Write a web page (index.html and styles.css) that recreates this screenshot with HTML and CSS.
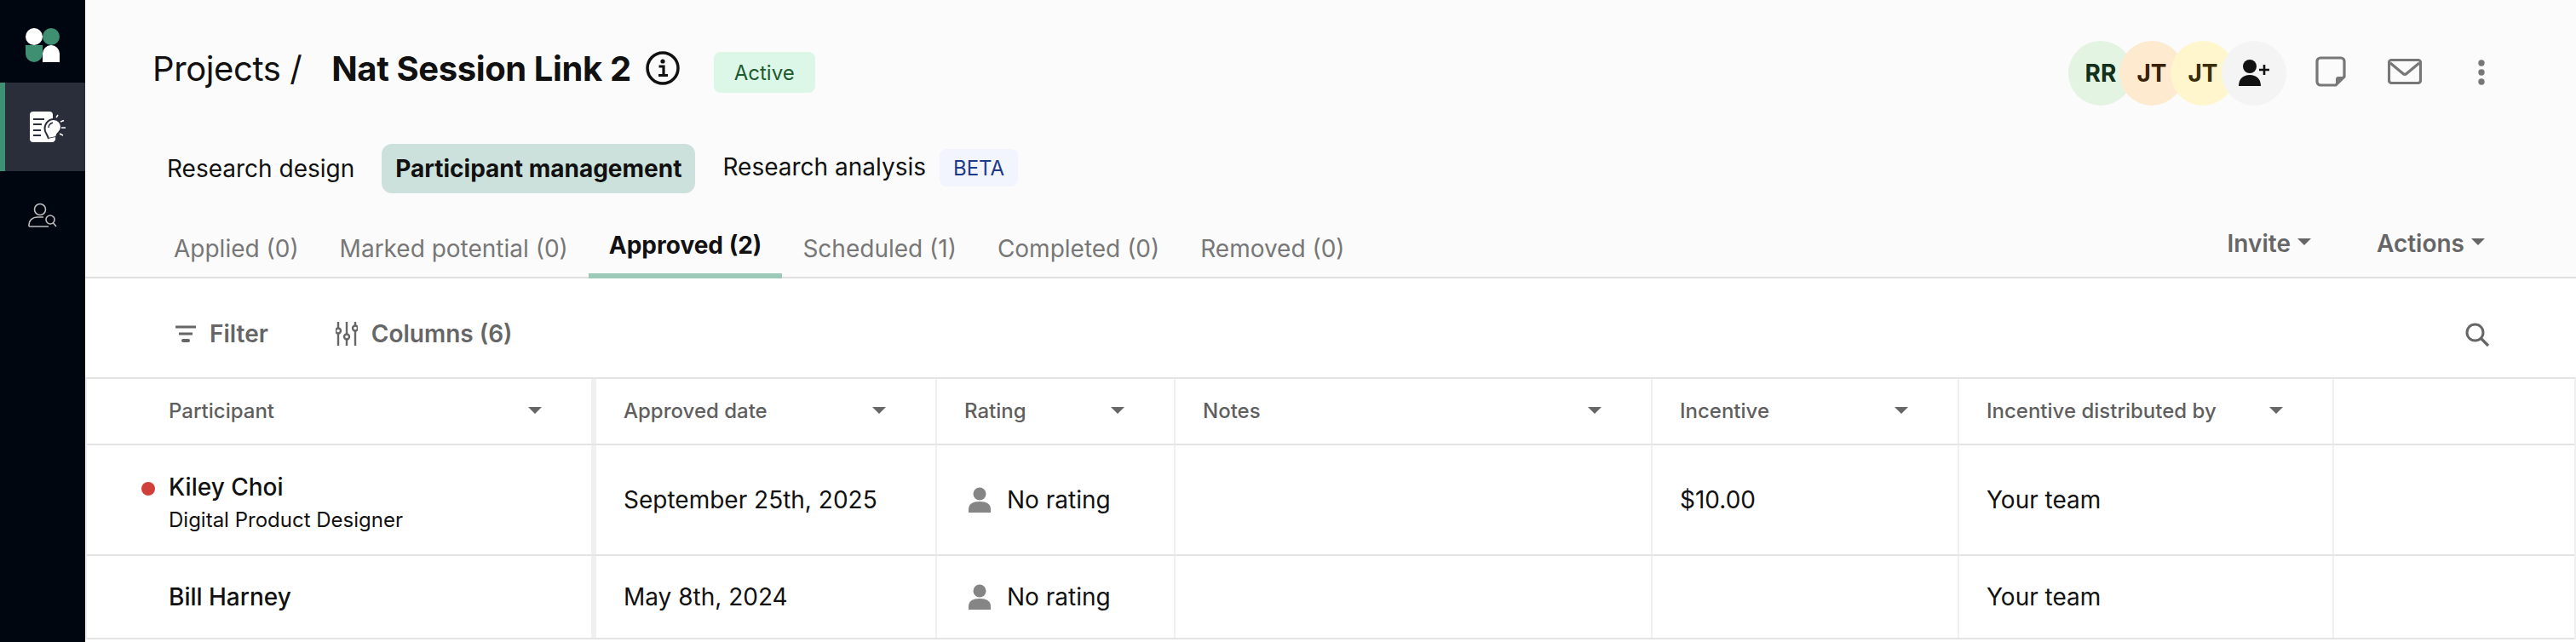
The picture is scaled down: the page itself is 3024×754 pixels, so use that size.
FILE: index.html
```html
<!DOCTYPE html>
<html lang="en">
<head>
<meta charset="utf-8">
<title>Nat Session Link 2</title>
<link rel="stylesheet" href="styles.css">
</head>
<body>
<div class="app">
  <aside class="sidebar">
    <div class="logo-wrap">
      <svg class="logo" width="40" height="40" viewBox="0 0 40 40"><circle cx="10" cy="10" r="10" fill="#fff"/><circle cx="30" cy="10" r="10" fill="#3f8f73"/><path d="M0 20h20v10a10 10 0 0 1-20 0z" fill="#3f8f73"/><path d="M20 40V30a10 10 0 0 1 20 0v10z" fill="#fff"/></svg>
    </div>
    <div class="side-item side-item-active">
      <svg width="44" height="38" viewBox="0 0 44 38"><rect x="1" y="1" width="27" height="36" rx="4" fill="#fff"/><path d="M5 10h13M5 16h10M5 23h9M5 29h9" stroke="#2a2e3a" stroke-width="1.800"/><path d="M19 24c-2-7 3-14 10-14 6 0 9 5 9 9 0 5-3 6-5 9l-1 3-9 2c-1-4-3-6-4-9z" fill="#fff" stroke="#2a2e3a" stroke-width="2"/><path d="M22 33l9-2c1 4-2 6-4 6s-4-1-5-4z" fill="#fff"/><path d="M23 20c0-3 2-5 5-6" fill="none" stroke="#2a2e3a" stroke-width="1.400"/><path d="M32 8l2-3M37 13l4-1.500M38 20h5M36 27l4 2" stroke="#fff" stroke-width="1.500" fill="none"/></svg>
    </div>
    <div class="side-item">
      <svg width="34" height="30" viewBox="0 0 34 30"><circle cx="14" cy="8" r="6.500" fill="none" stroke="#bdbdbd" stroke-width="1.600"/><path d="M1 28v-2c0-5 4-9 10-9h7M1 28h23" fill="none" stroke="#bdbdbd" stroke-width="1.600"/><circle cx="26" cy="20" r="5" fill="none" stroke="#bdbdbd" stroke-width="1.600"/><path d="M29.500 24l3.500 4" stroke="#bdbdbd" stroke-width="1.600"/></svg>
    </div>
  </aside>
  <main class="main">
    <header class="header">
      <div class="title-row">
        <div class="title-left">
          <span class="crumb">Projects /</span>
          <h1 class="title">Nat Session Link 2</h1>
          <svg class="info" width="40" height="40" viewBox="0 0 40 40"><circle cx="20" cy="20" r="18" fill="none" stroke="#111" stroke-width="3.500"/><circle cx="20" cy="12" r="2.600" fill="#111"/><path d="M15.500 18h5.500v10M15 28.500h11" fill="none" stroke="#111" stroke-width="3.200"/></svg>
          <span class="badge-active">Active</span>
        </div>
        <div class="title-right">
          <div class="avatars">
            <span class="avatar av-green">RR</span>
            <span class="avatar av-orange">JT</span>
            <span class="avatar av-yellow">JT</span>
            <span class="avatar av-grey">
              <svg width="36" height="32" viewBox="0 0 36 32"><circle cx="13" cy="8" r="8" fill="#111"/><path d="M0 31c0-8 5-13 13-13s13 5 13 13z" fill="#111"/><path d="M30 6v12M24 12h12" stroke="#111" stroke-width="2.600"/></svg>
            </span>
          </div>
          <svg class="icon-note" width="36" height="36" viewBox="0 0 36 36"><path d="M6 2h24a4 4 0 0 1 4 4v18L24 34H6a4 4 0 0 1-4-4V6a4 4 0 0 1 4-4z" fill="none" stroke="#777" stroke-width="3.200"/><path d="M24 34V27a3 3 0 0 1 3-3h7z" fill="#777"/></svg>
          <svg class="icon-mail" width="40" height="30" viewBox="0 0 40 30"><rect x="1.500" y="1.500" width="37" height="27" rx="3" fill="none" stroke="#777" stroke-width="3.200"/><path d="M3 5l15 12.500a3 3 0 0 0 4 0L37 5" fill="none" stroke="#777" stroke-width="3.200"/></svg>
          <svg class="icon-dots" width="12" height="34" viewBox="0 0 12 34"><circle cx="6" cy="6" r="3.700" fill="#777"/><circle cx="6" cy="17" r="3.700" fill="#777"/><circle cx="6" cy="28" r="3.700" fill="#777"/></svg>
        </div>
      </div>
      <nav class="nav-row">
        <a class="nav-link">Research design</a>
        <a class="nav-link nav-link-active">Participant management</a>
        <a class="nav-link nav-link-beta">Research analysis</a>
        <span class="badge-beta">BETA</span>
      </nav>
      <div class="tabs-row">
        <div class="tabs">
          <a class="tab">Applied (0)</a>
          <a class="tab">Marked potential (0)</a>
          <a class="tab tab-active">Approved (2)</a>
          <a class="tab">Scheduled (1)</a>
          <a class="tab">Completed (0)</a>
          <a class="tab">Removed (0)</a>
        </div>
        <div class="tab-actions">
          <button class="drop-btn">Invite<i class="caret caret-btn"></i></button>
          <button class="drop-btn">Actions<i class="caret caret-btn"></i></button>
        </div>
      </div>
    </header>
    <section class="toolbar">
      <div class="tool-left">
        <button class="tool-btn">
          <svg width="24" height="20" viewBox="0 0 24 20"><path d="M0 2h24M4 10h16" stroke="#666" stroke-width="3"/><path d="M9 18h6" stroke="#666" stroke-width="4" stroke-linecap="round"/></svg>
          Filter
        </button>
        <button class="tool-btn">
          <svg width="26" height="28" viewBox="0 0 26 28"><g fill="none" stroke="#666" stroke-width="2.400"><path d="M3 0v7M3 14v14M13 0v14M13 21v7M23 0v4M23 11v17"/><circle cx="3" cy="10.500" r="3"/><circle cx="13" cy="17.500" r="3"/><circle cx="23" cy="7.500" r="3"/></g></svg>
          Columns (6)
        </button>
      </div>
      <svg class="search" width="30" height="30" viewBox="0 0 30 30"><circle cx="12.500" cy="12.500" r="9.500" fill="none" stroke="#666" stroke-width="3"/><path d="M19.500 19.500L28 28" stroke="#666" stroke-width="3.200"/></svg>
    </section>
    <section class="table">
      <div class="row row-head">
        <div class="cell cell-first"><span>Participant</span><i class="caret"></i></div>
        <div class="cell"><span>Approved date</span><i class="caret"></i></div>
        <div class="cell"><span>Rating</span><i class="caret"></i></div>
        <div class="cell"><span>Notes</span><i class="caret"></i></div>
        <div class="cell"><span>Incentive</span><i class="caret"></i></div>
        <div class="cell"><span>Incentive distributed by</span><i class="caret"></i></div>
        <div class="cell cell-last"></div>
      </div>
      <div class="row row-tall">
        <div class="cell cell-first cell-person">
          <i class="status-dot"></i>
          <div class="person"><div class="person-name">Kiley Choi</div><div class="person-role">Digital Product Designer</div></div>
        </div>
        <div class="cell">September 25th, 2025</div>
        <div class="cell cell-rating"><svg width="28" height="30" viewBox="0 0 28 30"><circle cx="14" cy="8" r="7.500" fill="#858585"/><path d="M1 30v-4c0-6 5-9 13-9s13 3 13 9v4z" fill="#858585"/></svg>No rating</div>
        <div class="cell"></div>
        <div class="cell">$10.00</div>
        <div class="cell">Your team</div>
        <div class="cell cell-last"></div>
      </div>
      <div class="row row-short">
        <div class="cell cell-first"><div class="person-name">Bill Harney</div></div>
        <div class="cell">May 8th, 2024</div>
        <div class="cell cell-rating"><svg width="28" height="30" viewBox="0 0 28 30"><circle cx="14" cy="8" r="7.500" fill="#858585"/><path d="M1 30v-4c0-6 5-9 13-9s13 3 13 9v4z" fill="#858585"/></svg>No rating</div>
        <div class="cell"></div>
        <div class="cell"></div>
        <div class="cell">Your team</div>
        <div class="cell cell-last"></div>
      </div>
    </section>
  </main>
</div>
</body>
</html>
```
FILE: styles.css
```css
* { box-sizing: border-box; }
html, body { margin: 0; height: 100%; overflow: hidden; }
body { font-family: Inter, "Liberation Sans", sans-serif; color: #111; background: #fff; }
button { font: inherit; background: none; border: 0; padding: 0; }
.app { display: flex; height: 754px; }

.sidebar { width: 100px; flex: none; background: #000610; display: flex; flex-direction: column; }
.logo-wrap { height: 97px; display: flex; align-items: center; justify-content: center; padding-top: 8px; }
.side-item { height: 104px; display: flex; align-items: center; justify-content: center; }
.side-item-active { background: #2a2e3a; border-left: 6px solid #3f8f73; padding-left: 6px; }

.main { flex: 1; min-width: 0; display: flex; flex-direction: column; }
.header { height: 327px; background: #fbfbfb; border-bottom: 2px solid #e0e0e0; display: flex; flex-direction: column; }

.title-row { height: 160px; padding: 48px 105px 0 79px; display: flex; justify-content: space-between; align-items: flex-start; }
.title-left { display: flex; align-items: center; height: 64px; }
.crumb { font-size: 40px; font-weight: 400; letter-spacing: -0.4px; margin-right: 35px; }
.title { font-size: 40px; font-weight: 700; letter-spacing: -0.4px; margin: 0 17px 0 0; }
.info { flex: none; }
.badge-active { margin: 10px 0 0 40px; height: 48px; width: 119px; border-radius: 8px; background: #dcf6e7; color: #1c5a30; font-size: 24px; display: flex; align-items: center; justify-content: center; }

.title-right { display: flex; align-items: center; height: 76px; }
.avatars { display: flex; margin-right: 34px; }
.avatar { width: 76px; height: 76px; border-radius: 50%; display: flex; align-items: center; justify-content: center; font-size: 28px; font-weight: 700; margin-left: -16px; }
.avatar:first-child { margin-left: 0; }
.av-green { background: #e4f4e2; color: #12301a; }
.av-orange { background: #fdeacf; color: #3a2208; }
.av-yellow { background: #fff6cd; color: #3a2e08; }
.av-grey { background: #f4f4f4; }
.icon-note { margin: -4px 49px 0 0; }
.icon-mail { margin: -4px 64px 0 0; }
.icon-dots { margin-top: -2px; }

.nav-row { height: 58px; margin-top: 9px; padding-left: 80px; display: flex; align-items: center; font-size: 28px; }
.nav-link { padding: 0 16px; height: 58px; display: flex; align-items: center; border-radius: 12px; }
.nav-link-active { background: #cde1dc; font-weight: 700; margin-left: 16px; }
.nav-link-beta { margin-left: 32px; padding: 0 0 4px; }
.badge-beta { margin: 0 0 0 16px; height: 44px; width: 92px; border-radius: 8px; background: #f2f5fe; color: #1e3a8a; font-size: 24px; display: flex; align-items: center; justify-content: center; position: relative; top: -1px; }

.tabs-row { flex: 1; display: flex; justify-content: space-between; padding: 0 107px 0 80px; align-items: flex-end; }
.tabs { display: flex; margin-bottom: -2px; }
.tab { height: 62px; padding: 0 24px 8px; font-size: 28px; color: #777; display: flex; align-items: center; }
.tab-active { color: #111; font-weight: 700; border-bottom: 6px solid #9dc9b9; padding-bottom: 10px; }
.tab-actions { display: flex; gap: 77px; height: 62px; padding-bottom: 16px; align-items: center; }
.drop-btn { font-size: 28px; font-weight: 600; color: #666; display: flex; align-items: center; font-family: inherit; }
.caret { display: block; width: 0; height: 0; border-left: 8px solid transparent; border-right: 8px solid transparent; border-top: 8px solid #666; flex: none; }
.caret-btn { margin-left: 8px; margin-bottom: 4px; }

.toolbar { height: 116px; display: flex; align-items: center; justify-content: space-between; padding: 14px 101px 0 106px; flex: none; }
.tool-left { display: flex; gap: 79px; }
.tool-btn { display: flex; align-items: center; gap: 16px; font-size: 28px; font-weight: 600; color: #666; font-family: inherit; }
.search { margin-top: 2px; }

.table { border: 2px solid #f0f0f0; border-top: 2px solid #e4e4e4; border-bottom: 0; flex: none; }
.row { display: grid; grid-template-columns: 598px 400px 280px 560px 360px 440px 1fr; border-bottom: 2px solid #e4e4e4; font-size: 28px; }
.row-head { height: 78px; font-size: 24px; font-weight: 500; color: #5f5f5f; }
.row-tall { height: 130px; }
.row-short { height: 98px; }
.cell { display: flex; align-items: center; justify-content: flex-start; padding: 0 58px 1px 32px; border-right: 2px solid #f0f0f0; }
.row-head .cell { justify-content: space-between; padding-bottom: 2px; }
.cell-first { padding-left: 96px; border-right-width: 6px; }
.cell-last { border-right: 0; }
.cell-person { padding-left: 64px; gap: 16px; }
.status-dot { width: 16px; height: 16px; border-radius: 50%; background: #d0403a; flex: none; position: relative; top: -13px; }
.person { padding-top: 8px; }
.person-name { font-weight: 500; line-height: 34px; }
.person-role { font-size: 24px; line-height: 30px; margin-top: 7px; }
.cell-rating { gap: 18px; padding-left: 36px; }
.cell-rating svg { flex: none; }
```
